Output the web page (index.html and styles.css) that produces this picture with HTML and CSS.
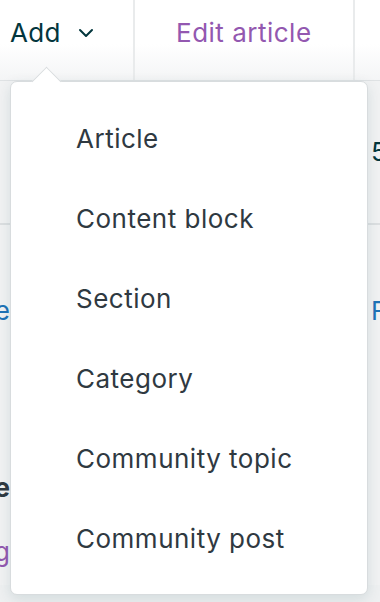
FILE: index.html
```html
<!DOCTYPE html>
<html>
<head>
<meta charset="utf-8">
<link rel="stylesheet" href="styles.css">
</head>
<body>
<div class="page">
  <header class="topbar">
    <div class="add">Add
      <svg class="chev" width="16" height="10" viewBox="0 0 16 10"><path d="M2 2 L8 8 L14 2" fill="none" stroke="#03363d" stroke-width="2" stroke-linecap="round" stroke-linejoin="round"/></svg>
    </div>
    <div class="edit">Edit article</div>
    <div class="rest"></div>
  </header>
  <section class="row row1">
    <span class="frag-left"></span>
    <span class="frag-right num">5</span>
  </section>
  <section class="row row2">
    <span class="frag-left link">Title</span>
    <span class="frag-right link">F</span>
  </section>
  <section class="row row3">
    <span class="frag-left bold">Name</span>
  </section>
  <section class="row row4">
    <span class="frag-left purple">Edit listing</span>
  </section>
</div>
<nav class="menu">
  <span class="arrow"></span>
  <ul class="items">
    <li>Article</li>
    <li>Content block</li>
    <li>Section</li>
    <li>Category</li>
    <li>Community topic</li>
    <li>Community post</li>
  </ul>
</nav>
</body>
</html>
```
FILE: styles.css
```css
html, body {
  margin: 0;
  padding: 0;
}
body {
  width: 380px;
  height: 602px;
  overflow: hidden;
  position: relative;
  background: #eef0f1;
  font-family: "Inter", "Liberation Sans", sans-serif;
}
.page {
  display: flex;
  flex-direction: column;
}
.topbar {
  height: 80px;
  display: flex;
  background: linear-gradient(#ffffff 0%, #ffffff 55%, #f4f5f6 100%);
  border-bottom: 1px solid #dfe2e4;
}
.add {
  width: 135px;
  box-sizing: border-box;
  border-right: 2px solid #e9ebec;
  display: flex;
  align-items: center;
  padding-left: 10px;
  padding-bottom: 16px;
  font-size: 26px;
  letter-spacing: 0.3px;
  color: #03363d;
}
.chev {
  margin-left: 17px;
  margin-top: 2px;
}
.edit {
  width: 220px;
  box-sizing: border-box;
  border-right: 2px solid #e9ebec;
  display: flex;
  align-items: center;
  padding-left: 41px;
  padding-bottom: 16px;
  font-size: 26px;
  letter-spacing: 0.5px;
  color: #9358b0;
}
.rest {
  flex: 1;
}
.row {
  display: flex;
  justify-content: space-between;
  align-items: center;
  font-size: 26px;
  background: #f1f2f3;
}
.row1 {
  height: 144px;
  border-bottom: 2px solid #dcdfe1;
  box-sizing: border-box;
  align-items: flex-start;
  padding-top: 55px;
}
.row2 {
  height: 232px;
  align-items: flex-start;
  padding-top: 70px;
  box-sizing: border-box;
}
.row3 {
  height: 60px;
}
.row4 {
  height: 68px;
}
.frag-left {
  display: block;
  width: 10px;
  direction: rtl;
  white-space: nowrap;
  overflow: hidden;
  text-align: right;
}
.frag-right {
  display: block;
  width: 9px;
  white-space: nowrap;
  overflow: hidden;
}
.num { color: #03363d; }
.link { color: #1f73b7; }
.bold { color: #2f3941; font-weight: 700; }
.purple { color: #9358b0; }
.menu {
  position: absolute;
  left: 10px;
  top: 81px;
  width: 358px;
  height: 514px;
  box-sizing: border-box;
  background: #ffffff;
  border: 1px solid #d8dcde;
  border-radius: 7px;
  box-shadow: 0 4px 14px rgba(4, 68, 77, 0.12);
}
.arrow {
  position: absolute;
  left: 25px;
  top: -11px;
  width: 20px;
  height: 20px;
  background: #ffffff;
  border-left: 1px solid #d8dcde;
  border-top: 1px solid #d8dcde;
  transform: rotate(45deg);
}
.items {
  list-style: none;
  margin: 0;
  padding: 16px 0 0 0;
  position: relative;
}
.items li {
  height: 80px;
  display: flex;
  align-items: center;
  padding-left: 65px;
  font-size: 26px;
  letter-spacing: 0.5px;
  color: #2f3941;
}
```
